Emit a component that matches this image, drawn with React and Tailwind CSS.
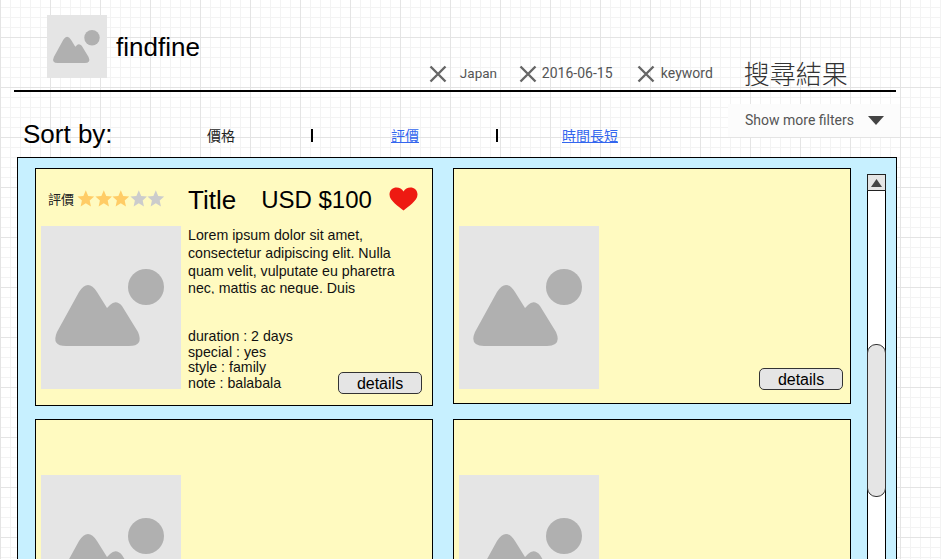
import React from "react";

const sans = "font-['Liberation_Sans',Arial,sans-serif]";
const roboto = "font-['Roboto',sans-serif]";
const cjk = "font-['Noto_Sans_CJK_TC','Liberation_Sans',sans-serif]";

function Placeholder({ className, viewBox = "0 0 140 163" }) {
  return (
    <svg
      className={className}
      viewBox={viewBox}
      preserveAspectRatio="none"
      aria-hidden="true"
    >
      <rect x="0" y="0" width="140" height="170" fill="#e5e5e5" />
      <circle cx="105" cy="61" r="18" fill="#b0b0b0" />
      <path
        d="M25 120Q10 120 16 106L38 66Q47 52 56 66L66 82L69 79Q75 73 81 80L97 106Q103 120 88 120Z"
        fill="#b0b0b0"
      />
    </svg>
  );
}

function CloseIcon({ className }) {
  return (
    <svg className={className} viewBox="0 0 18 18" aria-hidden="true">
      <path d="M1.5 1.5L16.5 16.5M16.5 1.5L1.5 16.5" stroke="#666666" strokeWidth="2.4" fill="none" />
    </svg>
  );
}

function Star({ on }) {
  return (
    <svg className="h-[17px] w-[17.6px]" viewBox="0 0 24 24" aria-hidden="true">
      <path
        d="M12 0.5L15.4 8.3L23.8 9.1L17.5 14.8L19.3 23.2L12 18.8L4.7 23.2L6.5 14.8L0.2 9.1L8.6 8.3Z"
        fill={on ? "#ffcc66" : "#cccccc"}
      />
    </svg>
  );
}

function Details({ className }) {
  return (
    <button className={`h-[22px] w-[84px] rounded-[5px] border border-[#333333] bg-[#e5e5e5] pt-[1px] text-[16px] leading-[20px] text-black ${className}`}>
      details
    </button>
  );
}

function FilterChip({ label, textClass }) {
  return (
    <div className="flex items-center">
      <CloseIcon className="h-[18px] w-[18px]" />
      <span className={`${roboto} text-[#555555] ${textClass}`}>{label}</span>
    </div>
  );
}

function ResultCard() {
  return (
    <div className="h-[238px] border border-black bg-[#fffac0] pl-[5px]">
      {/* Top row */}
      <div className="flex h-[57px] items-center pt-[2px]">
        <span className={`${cjk} ml-[7px] text-[13px] text-[#222222]`}>評價</span>
        <div className="ml-[3px] flex">
          <Star on />
          <Star on />
          <Star on />
          <Star />
          <Star />
        </div>
        <span className="mt-[2px] ml-[23px] text-[26px] leading-none text-black">Title</span>
        <span className="mt-[2px] ml-[25px] text-[24px] leading-none text-black">USD $100</span>
        <svg className="ml-[17px] h-[24px] w-[29px]" viewBox="0 0 29 24" aria-hidden="true">
          <path
            d="M14.5 23.5C10 19.5 0.5 14 0.5 7.5C0.5 3 4 0.5 7.5 0.5C10.5 0.5 13 2 14.5 4.5C16 2 18.5 0.5 21.500 0.5C25 0.5 28.500 3 28.500 7.500C28.500 14 19 19.500 14.500 23.500Z"
            fill="#ee1a12"
          />
        </svg>
      </div>

      {/* Body */}
      <div className="flex">
        <Placeholder className="h-[163px] w-[140px] shrink-0" />
        <div className="ml-[7px] flex-1 pr-[10px] text-[14.2px] text-[#111111]">
          <p className="h-[68px] w-[215px] overflow-hidden pt-[1px] leading-[17.8px]">
            Lorem ipsum dolor sit amet, consectetur adipiscing elit. Nulla quam velit, vulputate eu pharetra nec, mattis ac neque. Duis
          </p>
          <div className="mt-[35px] flex items-end justify-between leading-[15.7px]">
            <div>
              <div>duration : 2 days</div>
              <div>special : yes</div>
              <div>style : family</div>
              <div>note : balabala</div>
            </div>
            <Details className="-mb-[2px]" />
          </div>
        </div>
      </div>
    </div>
  );
}

function EmptyCard({ first }) {
  return (
    <div className={`border border-black bg-[#fffac0] pl-[5px] ${first ? "h-[236px] pt-[57px]" : "h-[300px] pt-[55px]"}`}>
      <div className="flex">
        <Placeholder className="h-[163px] w-[140px] shrink-0" />
        {first && (
          <div className="flex flex-1 items-end justify-end pr-[7px]">
            <Details className="-mb-[1px]" />
          </div>
        )}
      </div>
    </div>
  );
}

export default function App() {
  return (
    <div className={`${sans} h-[559px] w-[941px] overflow-hidden bg-white bg-[linear-gradient(to_right,#e4e4e4_1px,transparent_1px),linear-gradient(to_bottom,#e4e4e4_1px,transparent_1px),linear-gradient(to_right,#f3f3f3_1px,transparent_1px),linear-gradient(to_bottom,#f3f3f3_1px,transparent_1px)] bg-[size:50px_50px,50px_50px,10px_10px,10px_10px] bg-[position:0_0,0_37px,0_0,0_7px] pl-[14px]`}>
      {/* Header */}
      <header className="flex h-[92px] w-[882px] border-b-2 border-black">
        <Placeholder className="mt-[15px] ml-[33px] h-[63px] w-[60px]" viewBox="0 8 140 147" />
        <h1 className="mt-[31px] ml-[9px] h-[32px] text-[26px] leading-[32px] font-normal text-black">findfine</h1>
        <div className="mt-[64px] ml-[229px] flex h-[19px] items-center">
          <FilterChip label="Japan" textClass="ml-[13px] w-[59px] text-[13.5px]" />
          <FilterChip label="2016-06-15" textClass="ml-[5px] w-[95px] text-[14px]" />
          <FilterChip label="keyword" textClass="ml-[6px] text-[14px]" />
        </div>
        <div className={`${cjk} mt-[56px] ml-[31px] h-[34px] text-[26px] leading-[34px] font-light text-[#333333]`}>搜尋結果</div>
      </header>

      {/* Sort row */}
      <div className="flex h-[65px] w-[886px]">
        <div className="mt-[26px] ml-[9px] w-[184px] text-[26px] leading-[32px] text-black">Sort by:</div>
        <div className={`${cjk} mt-[33px] flex h-[20px] w-[411px] items-center text-[14px]`}>
          <span className="w-[104px] text-[#222222]">價格</span>
          <span className="h-[13px] w-[2px] bg-black" />
          <a className="ml-[78px] w-[105px] text-[#3366ee] underline">評價</a>
          <span className="h-[13px] w-[2px] bg-black" />
          <a className="ml-[64px] text-[#3366ee] underline">時間長短</a>
        </div>
        <div className="mt-[12px] ml-[110px] flex h-[33px] w-[172px] items-center bg-[#fcfcfc] pl-[17px]">
          <span className={`${roboto} w-[123px] text-[14px] text-[#555555]`}>Show more filters</span>
          <svg className="h-[9px] w-[16px]" viewBox="0 0 16 9" aria-hidden="true">
            <path d="M0 0H16L8 9Z" fill="#444444" />
          </svg>
        </div>
      </div>

      {/* Results panel */}
      <div className="ml-[3px] flex h-[420px] w-[880px] border border-black bg-[#c7f0ff] pt-[10px] pl-[17px]">
        <div className="grid w-[816px] grid-cols-[398px_398px] content-start items-start gap-x-[20px] gap-y-[13px]">
          <ResultCard />
          <EmptyCard first />
          <EmptyCard />
          <EmptyCard />
        </div>
        <div className="mt-[6px] ml-[16px] h-[420px] w-[19px] border-x border-black bg-white">
          <div className="-mx-px flex h-[17px] w-[19px] items-center justify-center border border-[#222222] bg-[#e5e5e5]">
            <svg className="h-[8px] w-[11px]" viewBox="0 0 11 8" aria-hidden="true">
              <path d="M5.500 0L11 8H0Z" fill="#444444" />
            </svg>
          </div>
          <div className="-mx-px mt-[153px] h-[153px] w-[19px] rounded-[9px] border border-[#333333] bg-[#e5e5e5]" />
        </div>
      </div>
    </div>
  );
}
